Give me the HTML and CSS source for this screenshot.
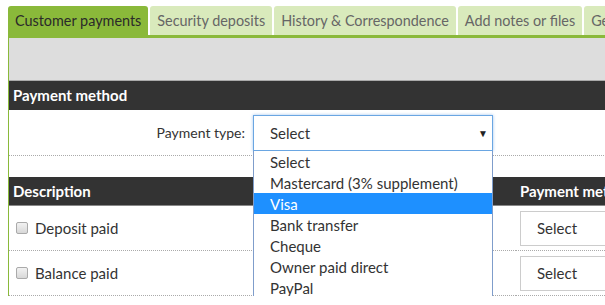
FILE: index.html
```html
<!DOCTYPE html>
<html lang="en">
<head>
    <meta charset="UTF-8">
    <meta name="viewport" content="width=device-width, initial-scale=1.0">
    <title>Customer payments</title>
    <link rel="stylesheet" href="styles.css">
</head>
<body>
    <div class="page">
        <ul class="tabs">
            <li class="tab active">Customer payments</li>
            <li class="tab">Security deposits</li>
            <li class="tab">History &amp; Correspondence</li>
            <li class="tab">Add notes or files</li>
            <li class="tab">General</li>
        </ul>
        <div class="panel">
            <div class="toolbar"></div>

            <div class="section-head">Payment method</div>
            <div class="form-row">
                <label class="form-label">Payment type:</label>
                <div class="select-wrap">
                    <div class="select focused">Select <span class="arrow">&#9660;</span></div>
                    <ul class="dropdown">
                        <li>Select</li>
                        <li>Mastercard (3% supplement)</li>
                        <li class="hover">Visa</li>
                        <li>Bank transfer</li>
                        <li>Cheque</li>
                        <li>Owner paid direct</li>
                        <li>PayPal</li>
                    </ul>
                </div>
            </div>

            <table class="payments">
                <thead>
                    <tr>
                        <th class="col-desc">Description</th>
                        <th>Payment method</th>
                    </tr>
                </thead>
                <tbody>
                    <tr>
                        <td><label class="check"><input type="checkbox"> Deposit paid</label></td>
                        <td class="col-method"><div class="select small">Select</div></td>
                    </tr>
                    <tr>
                        <td><label class="check"><input type="checkbox"> Balance paid</label></td>
                        <td class="col-method"><div class="select small">Select</div></td>
                    </tr>
                </tbody>
            </table>
        </div>
    </div>
</body>
</html>
```

FILE: styles.css
```css
html, body {
    margin: 0;
    overflow: hidden;
}
body {
    font-family: Lato, "Open Sans", sans-serif;
    font-size: 15px;
    color: #333;
    background: #fff;
    padding: 6px 0 0 8px;
}
.page {
    width: 900px;
}
.tabs {
    list-style: none;
    margin: 0;
    padding: 0;
    display: flex;
    gap: 2px;
    border-bottom: 3px solid #8ab93a;
}
.tab {
    height: 29px;
    line-height: 29px;
    padding: 0 7px;
    font-size: 14.4px;
    background: #d9eabc;
    color: #666;
    border-radius: 3px 3px 0 0;
    white-space: nowrap;
}
.tab.active {
    background: #8ab93a;
    color: #2a2a2a;
}
.panel {
    border-left: 1px solid #8ab93a;
    position: relative;
}
.toolbar {
    height: 42px;
    background: #dddddd;
}
.section-head {
    background: #333;
    color: #fff;
    font-weight: bold;
    height: 29px;
    line-height: 29px;
    padding-left: 4px;
    border-top: 1px solid #aaa;
}
.form-row {
    display: flex;
    align-items: flex-start;
    box-sizing: border-box;
    height: 46px;
    padding-top: 5px;
    border-bottom: 1px dotted #aaa;
    margin-bottom: 21px;
}
.form-label {
    width: 236px;
    line-height: 36px;
    text-align: right;
    font-size: 14px;
    margin-right: 8px;
}
.select-wrap {
    position: relative;
}
.select {
    box-sizing: border-box;
    width: 240px;
    height: 36px;
    line-height: 34px;
    padding-left: 16px;
    border: 1px solid #ccc;
    background: #fff;
    position: relative;
}
.select.focused {
    border-color: #6aa6e2;
    box-shadow: 0 0 3px rgba(100, 160, 230, 0.6);
}
.arrow {
    position: absolute;
    right: 4px;
    top: 0;
    font-size: 10px;
    color: #222;
}
.dropdown {
    position: absolute;
    left: 0;
    top: 36px;
    width: 240px;
    box-sizing: border-box;
    margin: 0;
    padding: 0 0 3px;
    list-style: none;
    background: #fff;
    border: 1px solid #7f9dcb;
    border-top: none;
    z-index: 5;
}
.dropdown li {
    height: 21px;
    line-height: 22px;
    padding-left: 16px;
    white-space: nowrap;
}
.dropdown li.hover {
    background: #1e90ff;
    color: #fff;
}
.payments {
    border-collapse: collapse;
    width: 800px;
}
.payments th {
    background: #333;
    color: #fff;
    text-align: left;
    height: 28px;
    padding: 0 4px;
    border-bottom: 1px solid #888;
}
.payments th.col-desc {
    width: 499px;
}
.payments td {
    height: 44px;
    padding: 0 7px;
    border-bottom: 1px dotted #aaa;
}
.payments td.col-method {
    padding: 0 4px;
}
.check {
    display: flex;
    align-items: center;
    gap: 7px;
}
.check input {
    appearance: none;
    margin: 0;
    width: 12px;
    height: 12px;
    border: 1px solid #aaa;
    border-radius: 2px;
    background: linear-gradient(#f2f2f2, #d8d8d8);
}
.select.small {
    width: 120px;
    height: 35px;
    line-height: 33px;
}
```
